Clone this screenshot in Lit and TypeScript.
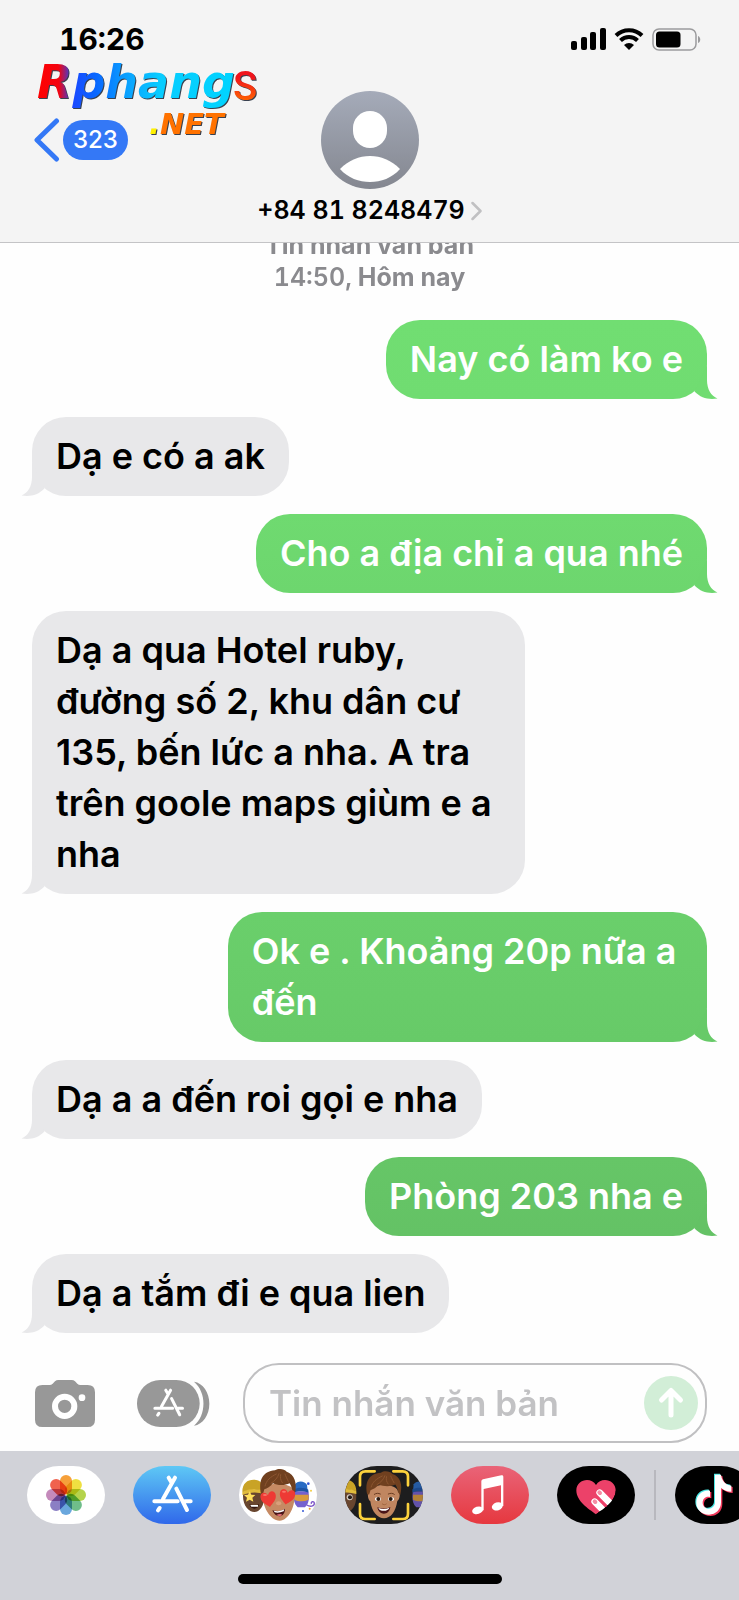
import { LitElement, html, css, svg } from "lit";
import { customElement, property } from "lit/decorators.js";
import { classMap } from "lit/directives/class-map.js";
import { styleMap } from "lit/directives/style-map.js";

interface Message {
  text: string;
  sent: boolean;
  /** Top and bottom colour of a sent bubble; it darkens down the thread. */
  shade?: [string, string];
}

const MESSAGES: Message[] = [
  { text: "Nay có làm ko e", sent: true, shade: ["#71de72", "#70dc71"] },
  { text: "Dạ e có a ak", sent: false },
  { text: "Cho a địa chỉ a qua nhé", sent: true, shade: ["#6fda70", "#6dd66e"] },
  {
    text: "Dạ a qua Hotel ruby, đường số 2, khu dân cư 135, bến lức a nha. A tra trên goole maps giùm e a nha",
    sent: false,
  },
  { text: "Ok e . Khoảng 20p nữa a đến", sent: true, shade: ["#6acf6b", "#67ca68"] },
  { text: "Dạ a a đến roi gọi e nha", sent: false },
  { text: "Phòng 203 nha e", sent: true, shade: ["#66c667", "#64c265"] },
  { text: "Dạ a tắm đi e qua lien", sent: false },
];

@customElement("chat-bubble")
class ChatBubble extends LitElement {
  @property({ attribute: false }) message!: Message;

  static styles = css`
    :host {
      display: flex;
    }
    .bubble {
      position: relative;
      box-sizing: border-box;
      padding: 14px 24px;
      border-radius: 34px;
      font-size: 36px;
      line-height: 51px;
      font-weight: 600;
    }
    .received {
      max-width: 73%;
      background: #e8e8ea;
      color: #000;
      --tail: #e8e8ea;
    }
    .sent {
      max-width: 71%;
      margin-left: auto;
      background: linear-gradient(var(--top), var(--tail));
      color: #fff;
    }
    .tail {
      position: absolute;
      bottom: 0;
      width: 45px;
      height: 34px;
      fill: var(--tail);
    }
    .sent .tail {
      right: -11px;
    }
    .received .tail {
      left: -11px;
      transform: scaleX(-1);
    }
  `;

  render() {
    const { text, sent, shade } = this.message;
    const vars = shade ? { "--top": shade[0], "--tail": shade[1] } : {};
    return html`<div class=${classMap({ bubble: true, sent, received: !sent })} style=${styleMap(vars)}>
      ${text}
      <svg class="tail" viewBox="0 0 45 34" aria-hidden="true">
        <path d="M34 0V15C34 24 38 31 44.500 33.500C35 34.800 28 33 21.500 26.500Z" />
      </svg>
    </div>`;
  }
}

const storeGlyph = svg`
  <g fill="none" stroke="#fff" stroke-width="12" stroke-linecap="round" stroke-linejoin="round">
    <path d="M126 35L90 99M107 35l9 15M130 68L162 132M64 106h70M155 106h18M80 126l-5 7" />
  </g>`;

const heart = "M0 20C-9 12-22 5-22-8C-22-21-6-24 0-11C6-24 22-21 22-8C22 5 9 12 0 20Z";

const petals = ["#f6a03a", "#efe041", "#b5d34c", "#6fbd8a", "#6aa7dd", "#8b7fc4", "#c48abb", "#f0624e"];

const sideKick = svg`
  <path d="M12 90c0-32 14-44 32-44s32 12 32 44c0 30-14 48-30 48S12 120 12 90z" fill="#69462f" />
  <path d="M10 78c0-26 15-37 34-37s32 13 32 35c-20-8-46-7-66 2z" fill="#c9a326" />
  <path d="M10 78c18-11 46-12 66-2v8c-22-7-44-6-66 3z" fill="#e0bb3b" />`;

const wizard = svg`
  <path d="M166 76h42c4 18 2 38-10 48h-22c-12-10-14-30-10-48z" fill="#7561cf" />
  <path d="M168 55c6-12 30-12 36 2l2 18h-40z" fill="#286bc4" />
  <path d="M164 70c14-7 32-6 44 1v9c-14-5-30-6-44 0z" fill="#1d54a5" />
  <path d="M166 86h43v15c-15 6-30 6-43 0z" fill="#d99b3c" />`;

const hair = svg`
  <path d="M66 84C58 44 70 16 108 13C118 6 136 8 143 17C166 24 176 50 167 86L161 78C159 68 157 60 152 52C136 60 114 58 102 52C94 62 84 68 76 70L72 84Z" fill="#70401f" />
  <path d="M78 60c4-17 16-27 34-36M96 52c12-8 20-16 24-29M130 50c-6-9-7-15-5-24M148 46c-5-10-8-16-10-22" fill="none" stroke="#8d5632" stroke-width="3" stroke-linecap="round" />`;

const icons = {
  photos: svg`<g transform="translate(117 87)">
    ${petals.map(
      (fill, i) =>
        svg`<rect class="petal" x="-18" y="-60" width="36" height="58" rx="18" fill=${fill} transform="rotate(${i * 45})" />`,
    )}
  </g>`,
  store: svg`${storeGlyph}`,
  memoji: svg`
    ${sideKick}
    <path d="M32 76l5 10 12 1-9 8 3 12-11-6-11 6 3-12-9-8 12-1z" fill="#ffdf5a" />
    <path d="M67 78l4 9 11 1-8 7 2 11-9-6z" fill="#ffdf5a" />
    <path d="M31 115c10 4 19 4 29 0-2 17-25 18-29 0z" fill="#32150f" />
    <path d="M34 117h23v5H37z" fill="#fff" />
    ${wizard}
    <path d="M203 117c10 6 24 5 23-6-2-7-11-4-9 3" fill="none" stroke="#8059c9" stroke-width="4" />
    <circle cx="208" cy="53" r="4" fill="#3659d5" /><circle cx="216" cy="74" r="3" fill="#f2cc42" />
    <circle cx="192" cy="135" r="3" fill="#3659d5" /><circle cx="212" cy="128" r="3" fill="#ef9a28" />
    <path d="M70 75c0-30 96-30 96 4 5 41-17 85-44 85-29 0-54-43-52-89z" fill="#c68a63" />
    <ellipse cx="119" cy="112" rx="8" ry="6" fill="#d9a07b" />
    ${hair}
    <path d="M100 133c16 4 27 2 38-5 0 27-28 31-38 5z" fill="#4a1416" />
    <path d="M104 134c13 3 22 1 32-4l-2 6c-10 4-19 5-27 3z" fill="#fff" />
    <path d="M112 147c7-4 15-4 18 0-4 4-11 5-18 0z" fill="#df6a72" />
    <path d=${heart} transform="translate(89 100) rotate(-10) scale(1.050 1.150)" fill="#ee3a34" />
    <path d=${heart} transform="translate(144 93) rotate(10) scale(1.050 1.150)" fill="#ee3a34" />
    <ellipse cx="78" cy="87" rx="6" ry="3" fill="#fb7468" /><ellipse cx="135" cy="77" rx="6" ry="3" fill="#fb7468" />`,
  camera: svg`
    <g transform="translate(-42 0)">${sideKick}</g>
    <circle cx="14" cy="94" r="9" fill="#d8cec5" /><circle cx="15" cy="94" r="6" fill="#251c18" />
    <g transform="translate(38 0)" opacity="0.800">${wizard}</g>
    <path d="M73 78c0-28 86-28 86 0 9 1 5 24-2 27-5 32-20 52-40 52S80 137 76 106c-8-5-10-26-3-28z" fill="#c08660" />
    <g transform="translate(2 8) scale(0.980 0.920)">${hair}</g>
    <ellipse cx="99" cy="99" rx="9" ry="6" fill="#fff" /><ellipse cx="138" cy="99" rx="9" ry="6" fill="#fff" />
    <circle cx="100" cy="99" r="6" fill="#2a1910" /><circle cx="137" cy="99" r="6" fill="#2a1910" />
    <path d="M88 85c6-4 12-4 18-1M130 84c6-3 13-3 18 1" fill="none" stroke="#6b3d23" stroke-width="3" stroke-linecap="round" />
    <path d="M112 114c3 3 9 3 12 0" fill="none" stroke="#a0653f" stroke-width="3" stroke-linecap="round" />
    <path d="M97 124c14 5 26 5 39-1-3 27-35 26-39 1z" fill="#4b1518" />
    <path d="M100 126c12 4 22 4 33-1-2 12-29 13-33 1z" fill="#fff" />
    <path d="M45 58V32q0-16 16-16h28M145 16h28q16 0 16 16v26M45 114v29q0 16 16 16h28M145 159h28q16 0 16-16v-29" fill="none" stroke="#fcd23c" stroke-width="8" stroke-linecap="round" />`,
  music: svg`<g fill="#fff">
    <path d="M91 46q0-5 5-6l55-12q6-1 6 4v88h-7V58L98 69v64h-7z" />
    <ellipse cx="80" cy="133" rx="17" ry="11" transform="rotate(-18 80 133)" />
    <ellipse cx="139" cy="121" rx="17" ry="12" transform="rotate(-18 139 121)" />
  </g>`,
  touch: svg`
    <path d="M117 145C94 128 58 106 58 73C58 40 102 31 117 57C132 31 176 40 176 73C176 106 140 128 117 145Z" fill="#ec4169" />
    <path d="M128 80l32 32M113 107l26 26" stroke="#fff" stroke-width="20" stroke-linecap="round" />
    <path d="M176 73C176 106 140 128 117 145L125 174L200 140Z" fill="#000" />
    <path d="M127 79l2 2M113 106l2 2" stroke="#f58da4" stroke-width="12" stroke-linecap="round" />
    <path d="M120 94l28 28" stroke="#ec4169" stroke-width="4" />`,
  tiktok: svg`${[
    ["#4ae8e4", "translate(-3 -3)"],
    ["#f23a5c", "translate(4 4)"],
    ["#fff", ""],
  ].map(
    ([fill, move]) =>
      svg`<path transform=${move} fill=${fill} d="M120 26h18c2 19 15 31 31 33v18c-12 0-22-4-31-11v43c0 22-16 37-36 37-22 0-38-16-38-36 0-22 18-39 41-36v19c-12-4-22 5-22 17 0 10 8 18 18 18 11 0 19-8 19-20z" />`,
  )}`,
};

const APPS: { id: keyof typeof icons; label: string }[] = [
  { id: "photos", label: "Ảnh" },
  { id: "store", label: "App Store" },
  { id: "memoji", label: "Nhãn dán Memoji" },
  { id: "camera", label: "Memoji" },
  { id: "music", label: "Nhạc" },
  { id: "touch", label: "Digital Touch" },
];

@customElement("app-root")
class AppRoot extends LitElement {
  static styles = css`
    :host {
      display: flex;
      flex-direction: column;
      min-height: 100vh;
      background: #fefefe;
      font-family: Inter, "Noto Sans", sans-serif;
      color: #000;
    }
    button {
      display: block;
      padding: 0;
      border: 0;
      background: none;
      font: inherit;
      color: inherit;
      cursor: pointer;
    }
    svg {
      display: block;
    }
    .header {
      position: relative;
      background: #f4f4f4;
      border-bottom: 1px solid #c4c4c6;
    }
    .status {
      display: flex;
      align-items: center;
      justify-content: space-between;
      padding: 21px 38px 0 59px;
      height: 36px;
    }
    .time {
      font-size: 30px;
      line-height: 36px;
      font-weight: 700;
      font-variant-numeric: tabular-nums;
    }
    .indicators {
      display: flex;
      gap: 8px;
      align-items: center;
    }
    .bar {
      display: grid;
      grid-template-columns: 1fr auto 1fr;
      padding: 34px 32px 14px;
    }
    .back {
      display: flex;
      align-items: center;
      align-self: start;
      justify-self: start;
      gap: 3px;
      padding-top: 27px;
    }
    .count {
      padding: 0 10px;
      border-radius: 20px;
      background: #3478f6;
      color: #fff;
      font-size: 24px;
      line-height: 40px;
      font-weight: 500;
    }
    .contact {
      display: flex;
      flex-direction: column;
      align-items: center;
      gap: 4px;
    }
    .number {
      display: flex;
      align-items: center;
      gap: 6px;
      font-size: 25px;
      line-height: 35px;
      font-weight: 600;
      font-variant-numeric: tabular-nums;
    }
    .watermark {
      position: absolute;
      left: 30px;
      top: 52px;
      pointer-events: none;
      filter: drop-shadow(1px 1px 0 #39414f);
    }
    .brand {
      font: italic 700 46px "DejaVu Sans", sans-serif;
    }
    .brand-end {
      font: 500 40px Roboto, sans-serif;
    }
    .brand-net {
      font: italic 700 29px "DejaVu Sans", sans-serif;
    }
    .thread {
      flex: 1;
      display: flex;
      flex-direction: column;
      gap: 18px;
      padding: 0 32px 28px;
      overflow: hidden;
    }
    .stamp {
      margin: -14px 0 9px;
      text-align: center;
      color: #8a8a8e;
      font-size: 25px;
      line-height: 32px;
      font-weight: 700;
    }
    .stamp-time {
      font-weight: 600;
      font-variant-numeric: tabular-nums;
    }
    .composer {
      display: flex;
      align-items: center;
      padding: 0 32px 8px 35px;
    }
    .store-button {
      margin: 0 33px 0 42px;
    }
    .field {
      flex: 1;
      min-width: 0;
      box-sizing: border-box;
      height: 80px;
      display: flex;
      align-items: center;
      padding: 0 7px 0 24px;
      border: 2px solid #c0c0c2;
      border-radius: 36px;
    }
    .input {
      flex: 1;
      min-width: 0;
      padding: 0;
      border: 0;
      outline: 0;
      background: none;
      font: inherit;
      font-size: 35px;
      line-height: 51px;
      font-weight: 600;
      color: #000;
    }
    .input::placeholder {
      color: #c2c2c4;
      opacity: 1;
    }
    .dock {
      background: #d1d2d8;
      overflow: hidden;
    }
    .apps {
      display: flex;
      align-items: center;
      gap: 28px;
      padding: 15px 0 0 27px;
    }
    .app {
      flex: none;
      width: 78px;
      height: 58px;
      border-radius: 32px / 29px;
      overflow: hidden;
      background: #000;
    }
    .photos,
    .memoji {
      background: #fff;
    }
    .store {
      background: linear-gradient(#5ec8f5, #3068ea);
    }
    .camera {
      background: #1d1d1e;
    }
    .music {
      background: linear-gradient(#e96478, #e6383f);
    }
    .petal {
      mix-blend-mode: multiply;
    }
    .divider {
      flex: none;
      width: 2px;
      height: 50px;
      margin: 0 -9px;
      background: #b8b8be;
    }
    .home {
      width: 264px;
      height: 10px;
      margin: 50px auto 16px;
      border-radius: 5px;
      background: #000;
    }
  `;

  private watermark() {
    return html`<svg class="watermark" width="240" height="92" viewBox="0 0 240 92" role="img" aria-label="Rphangs.NET">
      <defs>
        <linearGradient id="brand" x1="0" x2="1" y1="0" y2="0">
          <stop offset="0" stop-color="#ff0000" />
          <stop offset="0.110" stop-color="#f30410" />
          <stop offset="0.180" stop-color="#1a48ff" />
          <stop offset="0.300" stop-color="#0868ff" />
          <stop offset="0.450" stop-color="#0aa0ff" />
          <stop offset="0.620" stop-color="#08ccff" />
          <stop offset="1" stop-color="#00d4ff" />
        </linearGradient>
        <linearGradient id="tip" x1="0" x2="0" y1="0" y2="1">
          <stop offset="0.300" stop-color="#f0141c" />
          <stop offset="0.850" stop-color="#ff6a00" />
        </linearGradient>
      </defs>
      <text class="brand" x="7" y="46" fill="url(#brand)">Rphang</text>
      <text class="brand-end" x="203" y="48" fill="url(#tip)">S</text>
      <text class="brand-net" x="119" y="82" fill="#ff7200"><tspan fill="#fff000">.</tspan>NET</text>
    </svg>`;
  }

  private header() {
    return html`<header class="header">
      <div class="status">
        <span class="time">16:26</span>
        <div class="indicators">
          <svg width="35" height="22" viewBox="0 0 35 22" aria-hidden="true">
            <rect y="13" width="6" height="9" rx="2" /><rect x="10" y="9" width="6" height="13" rx="2" />
            <rect x="19" y="4" width="6" height="18" rx="2" /><rect x="29" width="6" height="22" rx="2" />
          </svg>
          <svg width="30" height="22" viewBox="0 0 30 22" aria-hidden="true">
            <path d="M2 7.500a18.500 18.500 0 0 1 26 0M6.500 12.500a12 12 0 0 1 17 0" fill="none" stroke="#000" stroke-width="4" />
            <path d="M15 22l-5-5a7.500 7.500 0 0 1 10 0z" />
          </svg>
          <svg width="49" height="23" viewBox="0 0 49 23" aria-hidden="true">
            <rect x="1" y="1" width="43" height="21" rx="6" fill="none" stroke="#9b9b9d" stroke-width="1.500" />
            <rect x="4" y="3.500" width="24.500" height="16" rx="3.500" />
            <path d="M46 8c3 1 3 6 0 7z" fill="#9b9b9d" />
          </svg>
        </div>
      </div>
      <div class="bar">
        <button class="back" aria-label="Quay lại, 323 tin nhắn">
          <svg width="28" height="44" viewBox="0 0 28 44" aria-hidden="true">
            <path d="M24.500 3L5 22L24.500 41" fill="none" stroke="#3478f6" stroke-width="5" stroke-linecap="round" stroke-linejoin="round" />
          </svg>
          <span class="count">323</span>
        </button>
        <button class="contact">
          <svg width="98" height="98" viewBox="0 0 98 98" aria-hidden="true">
            <defs>
              <linearGradient id="avatar" x1="0" x2="0" y1="0" y2="1">
                <stop stop-color="#a5abb9" /><stop offset="1" stop-color="#848790" />
              </linearGradient>
            </defs>
            <circle cx="49" cy="49" r="49" fill="url(#avatar)" />
            <rect x="32" y="20" width="34" height="37" rx="17" fill="#fff" />
            <path d="M19 78C28 69 38 65 49 65S70 69 79 78C71 87 60 91 49 91S27 87 19 78Z" fill="#fff" />
          </svg>
          <span class="number">
            +84 81 8248479
            <svg width="11" height="20" viewBox="0 0 11 20" aria-hidden="true">
              <path d="M1.500 2L9.500 10L1.500 18" fill="none" stroke="#c0c0c2" stroke-width="2.500" stroke-linecap="round" stroke-linejoin="round" />
            </svg>
          </span>
        </button>
      </div>
      ${this.watermark()}
    </header>`;
  }

  private composer() {
    return html`<form class="composer" @submit=${(e: Event) => e.preventDefault()}>
      <button type="button" aria-label="Máy ảnh">
        <svg width="60" height="47" viewBox="0 0 180 141" aria-hidden="true">
          <path d="M22 15h22q5 0 9-4l7-7q4-4 10-4h40q6 0 10 4l7 7q4 4 9 4h22q22 0 22 22v82q0 22-22 22H22q-22 0-22-22V37q0-22 22-22z" fill="#989898" />
          <circle cx="89" cy="79" r="29" fill="none" stroke="#fff" stroke-width="18" />
          <circle cx="141" cy="53" r="10" fill="#fff" />
        </svg>
      </button>
      <button type="button" class="store-button" aria-label="Ứng dụng">
        <svg width="73" height="47" viewBox="0 0 219 141" aria-hidden="true">
          <rect width="188" height="141" rx="70" fill="#989898" />
          <path d="M171 5c27 4 46 32 46 66s-19 62-46 66c38-32 38-100 0-132z" fill="#989898" />
          <g transform="translate(5 4) scale(0.760)">${storeGlyph}</g>
        </svg>
      </button>
      <div class="field">
        <input class="input" type="text" placeholder="Tin nhắn văn bản" aria-label="Tin nhắn văn bản" />
        <button type="submit" aria-label="Gửi">
          <svg width="54" height="54" viewBox="0 0 54 54" aria-hidden="true">
            <circle cx="27" cy="27" r="27" fill="#d2eed7" />
            <path d="M27 39V15M17.500 24L27 14.500L36.500 24" fill="none" stroke="#fff" stroke-width="5" stroke-linecap="round" stroke-linejoin="round" />
          </svg>
        </button>
      </div>
    </form>`;
  }

  private app(id: keyof typeof icons, label: string) {
    return html`<button class="app ${id}" aria-label=${label}>
      <svg width="78" height="58" viewBox="0 0 234 174" aria-hidden="true">${icons[id]}</svg>
    </button>`;
  }

  render() {
    return html`
      ${this.header()}
      <main class="thread">
        <p class="stamp">Tin nhắn văn bản<br /><span class="stamp-time">14:50,</span> Hôm nay</p>
        ${MESSAGES.map((message) => html`<chat-bubble .message=${message}></chat-bubble>`)}
      </main>
      ${this.composer()}
      <footer class="dock">
        <nav class="apps" aria-label="Ứng dụng iMessage">
          ${APPS.map(({ id, label }) => this.app(id, label))}
          <span class="divider"></span>
          ${this.app("tiktok", "TikTok")}
        </nav>
        <div class="home"></div>
      </footer>
    `;
  }
}
